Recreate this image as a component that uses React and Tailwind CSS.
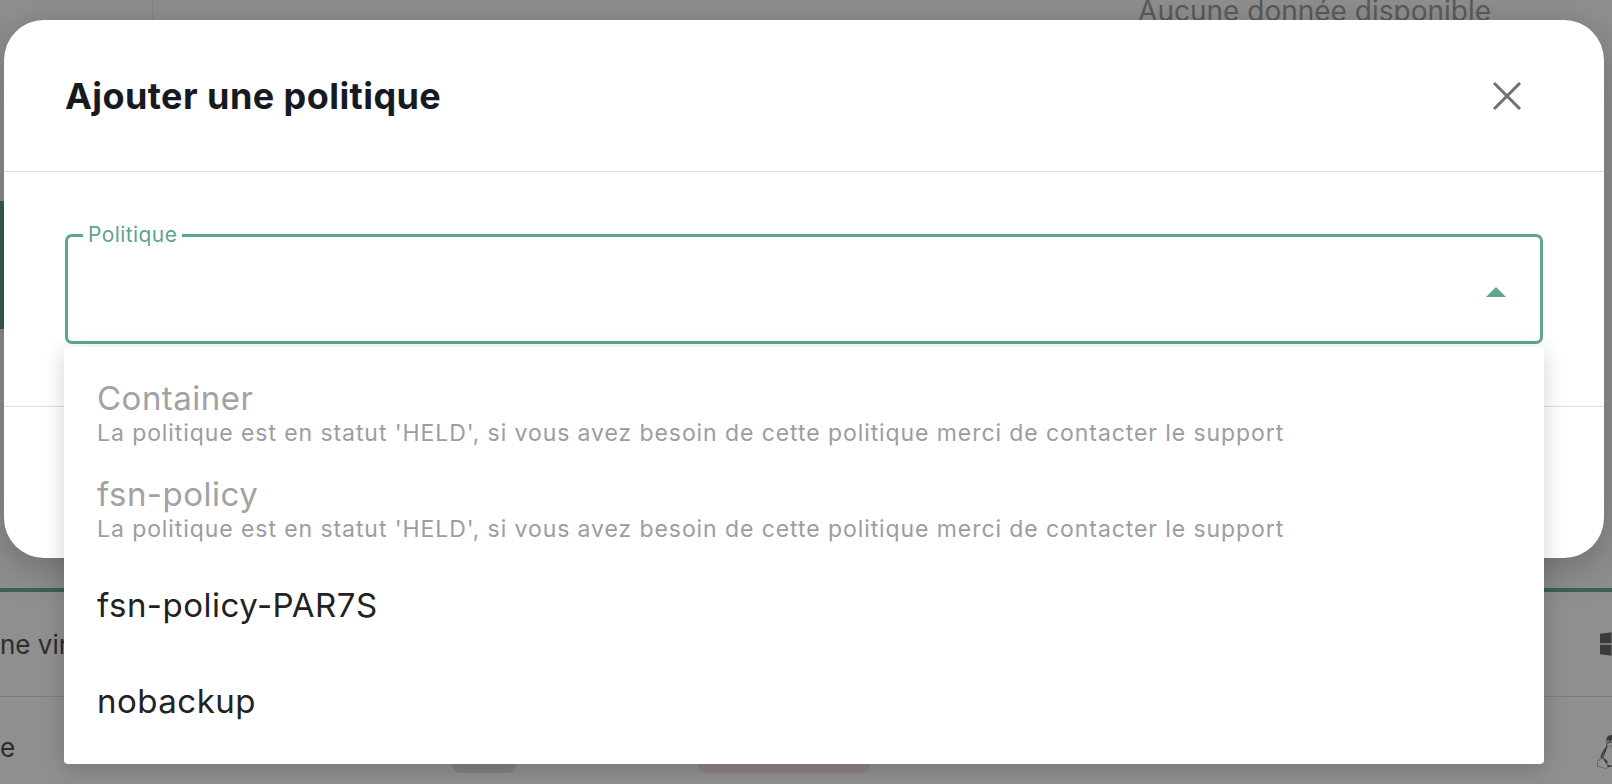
import React from 'react'
import { FaWindows, FaLinux } from 'react-icons/fa'

const policies = [
  { name: 'Container', held: true },
  { name: 'fsn-policy', held: true },
  { name: 'fsn-policy-PAR7S', held: false },
  { name: 'nobackup', held: false },
]

const HELD_MSG =
  "La politique est en statut 'HELD', si vous avez besoin de cette politique merci de contacter le support"

// page behind the dimmed overlay
function BackgroundPage() {
  return (
    <div className="flex h-full flex-col">
      <div className="flex h-[20px] shrink-0">
        <div className="w-[153px] border-r border-[#848484]" />
        <div className="flex flex-1 justify-end pr-[121px]">
          <span className="-mt-[5px] whitespace-nowrap text-[28px] leading-[32px] text-[#5b5b5b]">Aucune donnée disponible</span>
        </div>
      </div>
      <div className="flex flex-1 flex-col">
        <div className="h-[181px] shrink-0" />
        <div className="h-[128px] w-[4px] shrink-0 bg-[#3c5c52]" />
        <div className="h-[259px] shrink-0" />
        <div className="h-[4px] shrink-0 bg-[#3d6257]" />
        <div className="flex h-[105px] shrink-0 items-center justify-between border-b border-[#7c7c7c]">
          <span className="text-[26px] text-[#2d2d2d]">ne virtuelle</span>
          <FaWindows className="-mr-[18px] text-[32px] text-[#3a3a3a]" />
        </div>
        <div className="flex flex-1 items-start">
          <span className="pt-[35px] text-[26px] leading-[31px] text-[#2d2d2d]">e</span>
          <div className="ml-[437px] mt-[40px] h-[36px] w-[64px] rounded-[8px] bg-[#808184]" />
          <div className="ml-[182px] mt-[40px] h-[36px] w-[172px] rounded-[8px] bg-[#8e8182]" />
          <div className="flex-1" />
          <FaLinux className="-mr-[16px] mt-[38px] text-[34px] text-[#3a3a3a]" />
        </div>
      </div>
    </div>
  )
}

export default function App() {
  return (
    <div
      className="relative h-[784px] w-full overflow-hidden bg-[#8f8f8f]"
      style={{ fontFamily: 'Inter, "Liberation Sans", sans-serif' }}
    >
      <BackgroundPage />

      {/* Modal */}
      <div className="absolute left-[4px] top-[20px] flex h-[538px] w-[1600px] flex-col rounded-[40px] bg-white shadow-[0_10px_40px_rgba(0,0,0,0.25)]">
        <div className="flex h-[152px] shrink-0 items-center justify-between border-b border-[#e0e0e0] pl-[61px] pr-[83px]">
          <h2 className="text-[36px] font-bold tracking-[0.012em] text-[#161a23]">Ajouter une politique</h2>
          <button className="text-[#707070]">
            <svg width="28" height="28" viewBox="0 0 28 28" fill="none" stroke="currentColor" strokeWidth="3">
              <path d="M1 1 27 27M27 1 1 27" />
            </svg>
          </button>
        </div>

        <div className="shrink-0 px-[61px] pb-[62px] pt-[52px]">
          <fieldset className="h-[120px] rounded-[7px] border-[3px] border-[#5ea68c] pl-[15px] pr-[16px]">
            <legend className="px-[5px] text-[21px] leading-[22px] tracking-[0.02em] text-[#5ea68c]">Politique</legend>
            <div className="flex h-[80px] items-center justify-end pr-[18px]">
              <div className="mt-[11px] h-0 w-0 border-x-[10px] border-b-[10px] border-x-transparent border-b-[#5ea68c]" />
            </div>
          </fieldset>
        </div>

        <div className="flex-1 border-t border-[#e0e0e0]" />
      </div>

      {/* Open select menu */}
      <ul className="absolute left-[64px] top-[347px] w-[1480px] rounded-[4px] bg-white pb-[15px] pt-[18px] shadow-[0_5px_22px_rgba(0,0,0,0.18)]">
        {policies.map(p => (
          <li key={p.name} className="flex h-[96px] flex-col justify-center px-[33px]">
            <span
              className={`text-[33px] leading-[40px] tracking-[0.015em] ${p.held ? 'text-[#a2a2a2]' : 'text-[#222222]'}`}
            >
              {p.name}
            </span>
            {p.held && (
              <span className="text-[23px] leading-[30px] tracking-[0.04em] text-[#9d9d9d]">{HELD_MSG}</span>
            )}
          </li>
        ))}
      </ul>
    </div>
  )
}
